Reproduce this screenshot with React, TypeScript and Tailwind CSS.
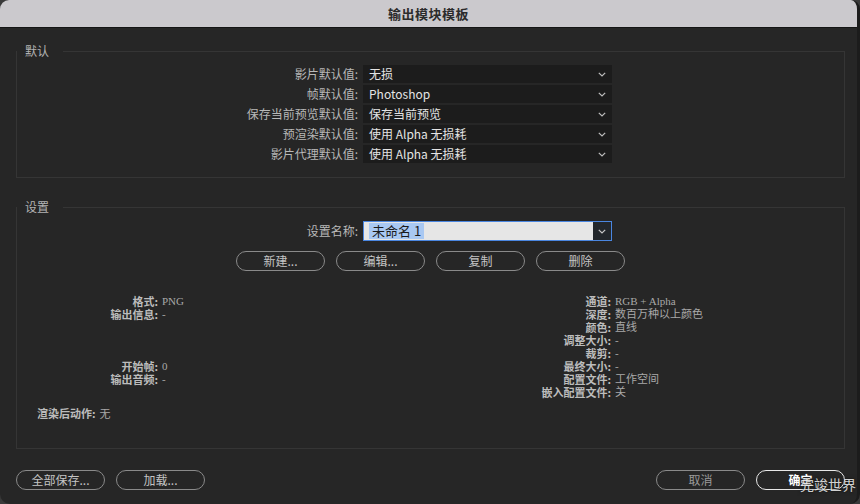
import React from 'react';

const CJK = "font-['Noto_Sans_CJK_SC','Noto_Sans',sans-serif]";

const DEFAULT_ROWS = [
  { label: '影片默认值:', value: '无损' },
  { label: '帧默认值:', value: 'Photoshop' },
  { label: '保存当前预览默认值:', value: '保存当前预览' },
  { label: '预渲染默认值:', value: '使用 Alpha 无损耗' },
  { label: '影片代理默认值:', value: '使用 Alpha 无损耗' },
];

const LEFT_INFO = [
  ['格式:', 'PNG'],
  ['输出信息:', '-'],
  ['', ''],
  ['', ''],
  ['', ''],
  ['开始帧:', '0'],
  ['输出音频:', '-'],
  ['', ''],
];

const RIGHT_INFO = [
  ['通道:', 'RGB + Alpha'],
  ['深度:', '数百万种以上颜色'],
  ['颜色:', '直线'],
  ['调整大小:', '-'],
  ['裁剪:', '-'],
  ['最终大小:', '-'],
  ['配置文件:', '工作空间'],
  ['嵌入配置文件:', '关'],
];

function Chevron({ color = '#bdbdbd' }: { color?: string }) {
  return (
    <svg width="8" height="5" viewBox="0 0 8 5" fill="none">
      <path d="M0.8 0.8 L4 4 L7.2 0.8" stroke={color} strokeWidth="1.2" />
    </svg>
  );
}

function PillButton({ label, primary = false, dim = false }: { label: string; primary?: boolean; dim?: boolean }) {
  return (
    <button
      className={`w-[89px] h-[20px] rounded-full flex items-center justify-center text-[12px] leading-none bg-[#262626] ${
        primary
          ? 'border-[1.5px] border-[#e8e8e8] text-white font-bold'
          : 'border-[1.5px] border-[#8a8a8a] ' + (dim ? 'text-[#9a9a9a]' : 'text-[#c4c4c4]')
      }`}
    >
      {label}
    </button>
  );
}

function InfoColumn({ rows, labelWidth }: { rows: string[][]; labelWidth: string }) {
  return (
    <div className="flex flex-col">
      {rows.map(([k, v], i) => (
        <div key={i} className="flex h-[13px] items-center">
          <span className={`${labelWidth} text-right font-bold text-[11px] leading-[13px] text-[#bcbcbc]`}>{k}</span>
          <span className="pl-[4px] text-[11px] leading-[13px] text-[#a9a9a9] font-['Liberation_Serif','Noto_Sans_CJK_SC',serif]">
            {v}
          </span>
        </div>
      ))}
    </div>
  );
}

export default function App() {
  return (
    <div className={`w-[860px] h-[504px] bg-[#3a3a3a] ${CJK}`}>
      <div className="relative w-[860px] h-[504px] flex flex-col bg-[#262626] rounded-t-[9px] rounded-b-[10px] overflow-hidden border-r-[3px] border-[#1c1c1c]">
        {/* Title bar */}
        <div className="h-[28px] shrink-0 flex items-center justify-center bg-[#cbc9cd] border-b border-[#151515]">
          <span className="text-[13px] font-bold text-[#2b2b2b] tracking-[0.5px]">输出模块模板</span>
        </div>

        <div className="flex-1 flex flex-col pl-[16px] pr-[12px]">
          {/* 默认 */}
          <fieldset className="mt-[15px] border border-[#353535] pb-[14px]">
            <legend className="pl-[8px] pr-[14px] text-[12px] leading-[16px] text-[#b3b3b3]">默认</legend>
            <div className="pt-[6px] flex flex-col gap-[2px]">
              {DEFAULT_ROWS.map((r) => (
                <div key={r.label} className="flex items-center h-[18px]">
                  <span className="w-[341px] text-right text-[12px] text-[#b8b8b8]">{r.label}</span>
                  <div className="ml-[5px] w-[249px] h-[18px] bg-[#1c1c1c] flex items-center justify-between pl-[6px] pr-[6px]">
                    <span className="text-[12px] text-[#e4e4e4]">{r.value}</span>
                    <Chevron />
                  </div>
                </div>
              ))}
            </div>
          </fieldset>

          {/* 设置 */}
          <fieldset className="mt-[21px] border border-[#353535] pb-[28px]">
            <legend className="pl-[8px] pr-[14px] text-[12px] leading-[16px] text-[#b3b3b3]">设置</legend>
            <div className="pt-[6px] flex items-center h-[26px]">
              <span className="w-[341px] text-right text-[12px] text-[#b8b8b8]">设置名称:</span>
              <div className="ml-[5px] w-[249px] h-[20px] bg-[#e6e6e6] border border-[#4a86e0] flex items-center justify-between">
                <span className="ml-[5px] px-[3px] bg-[#a9c8f2] text-[13px] leading-[16px] text-[#1a1a1a]">未命名 1</span>
                <div className="w-[18px] h-full bg-[#23272b] flex items-center justify-center">
                  <Chevron color="#c8c8c8" />
                </div>
              </div>
            </div>
            <div className="mt-[10px] flex justify-center gap-[11px]">
              <PillButton label="新建..." />
              <PillButton label="编辑..." />
              <PillButton label="复制" />
              <PillButton label="删除" />
            </div>

            <div className="mt-[24px] flex">
              <div className="w-[400px]">
                <InfoColumn rows={LEFT_INFO} labelWidth="w-[141px]" />
              </div>
              <InfoColumn rows={RIGHT_INFO} labelWidth="w-[194px]" />
            </div>
            <div className="mt-[8px] pl-[20px] flex h-[13px] items-center">
              <span className="font-bold text-[11px] leading-[13px] text-[#bcbcbc]">渲染后动作:</span>
              <span className="pl-[4px] text-[11px] leading-[13px] text-[#a9a9a9]">无</span>
            </div>
          </fieldset>

          {/* Bottom buttons */}
          <div className="mt-[21px] flex items-center justify-between">
            <div className="flex gap-[11px]">
              <PillButton label="全部保存..." />
              <PillButton label="加载..." />
            </div>
            <div className="flex gap-[11px]">
              <PillButton label="取消" dim />
              <PillButton label="确定" primary />
            </div>
          </div>
        </div>

        {/* watermark */}
        <span className="absolute left-[800px] top-[475px] text-[14px] leading-[18px] text-[#e6e6e6] opacity-90 [text-shadow:0_0_2px_#000]">
          完竣世界
        </span>
      </div>
    </div>
  );
}
